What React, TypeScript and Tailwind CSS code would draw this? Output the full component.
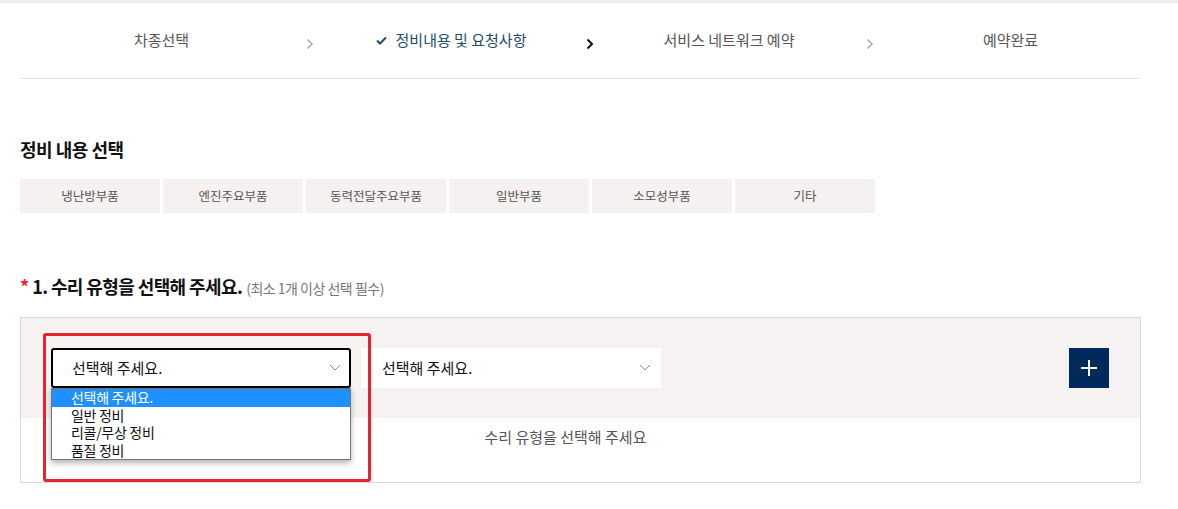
import React from "react";

const font = { fontFamily: '"Noto Sans CJK KR", "Noto Sans", sans-serif' };

function Chevron({ dark }: { dark?: boolean }) {
  return (
    <svg width="8" height="12" viewBox="0 0 8 12" className="absolute top-[35px] left-[3px]">
      <path d="M1.5 1.5 L6 6 L1.5 10.5" fill="none" stroke={dark ? "#111" : "#aaa"} strokeWidth={dark ? 2 : 1.5} />
    </svg>
  );
}

function SelectChevron() {
  return (
    <svg width="12" height="8" viewBox="0 0 12 8">
      <path d="M1 1 L6 6 L11 1" fill="none" stroke="#888" strokeWidth="1" />
    </svg>
  );
}

export default function App() {
  const tabs = ["냉난방부품", "엔진주요부품", "동력전달주요부품", "일반부품", "소모성부품", "기타"];
  return (
    <div className="w-[1178px] h-[509px] bg-white relative overflow-hidden" style={font}>
      <div className="h-[3px] bg-[#ececec]" />
      <div className="pl-[20px] w-[1140px]">
        {/* steps */}
        <div className="flex h-[76px] border-b border-[#e3e3e3] items-center">
          <div className="relative w-[283px] h-full flex items-center justify-center text-[15px] text-[#555]">차종선택</div>
          <div className="relative w-[280px] h-full flex items-center justify-center text-[15px] text-[#1d4c68] pl-[16px]">
            <Chevron />
            <svg width="11" height="9" viewBox="0 0 11 9" className="mr-[9px]">
              <path d="M1 4.5 L4 7.5 L10 1.5" fill="none" stroke="#1d4c68" strokeWidth="2" />
            </svg>
            정비내용 및 요청사항
          </div>
          <div className="relative w-[280px] h-full flex items-center justify-center text-[15px] text-[#555] pl-[12px]">
            <Chevron dark />
            서비스 네트워크 예약
          </div>
          <div className="relative w-[277px] h-full flex items-center justify-center text-[15px] text-[#555] pl-[18px]">
            <Chevron />
            예약완료
          </div>
        </div>

        <div className="mt-[57px] text-[18px] font-bold text-[#111] tracking-[-0.5px] leading-[26px]">정비 내용 선택</div>
        <div className="mt-[17px] flex gap-[3px]">
          {tabs.map((t) => (
            <div key={t} className="w-[140px] h-[34px] bg-[#f4f1f0] flex items-center justify-center text-[12.5px] text-[#555]">
              {t}
            </div>
          ))}
        </div>

        <div className="mt-[60px] flex items-baseline leading-[26px]">
          <span className="text-[#e8222e] text-[18px] font-bold mr-[3px]">*</span>
          <span className="text-[18px] font-bold text-[#111] tracking-[-0.6px]">1. 수리 유형을 선택해 주세요.</span>
          <span className="ml-[4px] text-[14px] text-[#777] tracking-[-0.5px]">(최소 1개 이상 선택 필수)</span>
        </div>

        <div className="mt-[16px] border border-[#ddd8d3] w-[1121px]">
          <div className="bg-[#f5f2f1] h-[100px] flex items-start pt-[30px] pl-[30px] pr-[30px]">
            <div className="relative w-[300px] h-[40px] bg-white border-2 border-black rounded-[3px] flex items-center justify-between pl-[19px] pr-[8px] text-[15px] text-[#111]">
              <span>선택해 주세요.</span>
              <SelectChevron />
              <div className="absolute left-[-2px] top-[38px] w-[300px] bg-white border border-[#767676] shadow-[0_3px_6px_rgba(0,0,0,0.3)] text-[14px] leading-[17.5px] tracking-[-0.3px] z-10">
                <div className="bg-[#1e90ff] text-white pl-[19px]">선택해 주세요.</div>
                <div className="pl-[19px] text-[#111]">일반 정비</div>
                <div className="pl-[19px] text-[#111]">리콜/무상 정비</div>
                <div className="pl-[19px] text-[#111]">품질 정비</div>
              </div>
            </div>
            <div className="ml-[10px] w-[300px] h-[40px] bg-white flex items-center justify-between pl-[21px] pr-[10px] text-[15px] text-[#111]">
              <span>선택해 주세요.</span>
              <SelectChevron />
            </div>
            <div className="ml-auto mr-[1px] w-[40px] h-[40px] bg-[#002a5a] flex items-center justify-center">
              <svg width="18" height="18" viewBox="0 0 18 18">
                <path d="M9 1 V17 M1 9 H17" stroke="white" strokeWidth="2" />
              </svg>
            </div>
          </div>
          <div className="h-[64px] flex items-start justify-center pt-[8px] pr-[30px] text-[15px] leading-[22px] text-[#555]">수리 유형을 선택해 주세요</div>
        </div>
      </div>

      {/* red annotation */}
      <div className="absolute left-[43px] top-[333px] w-[328px] h-[149px] border-[3px] border-[#e8222e] rounded-[3px] z-20" />
    </div>
  );
}
